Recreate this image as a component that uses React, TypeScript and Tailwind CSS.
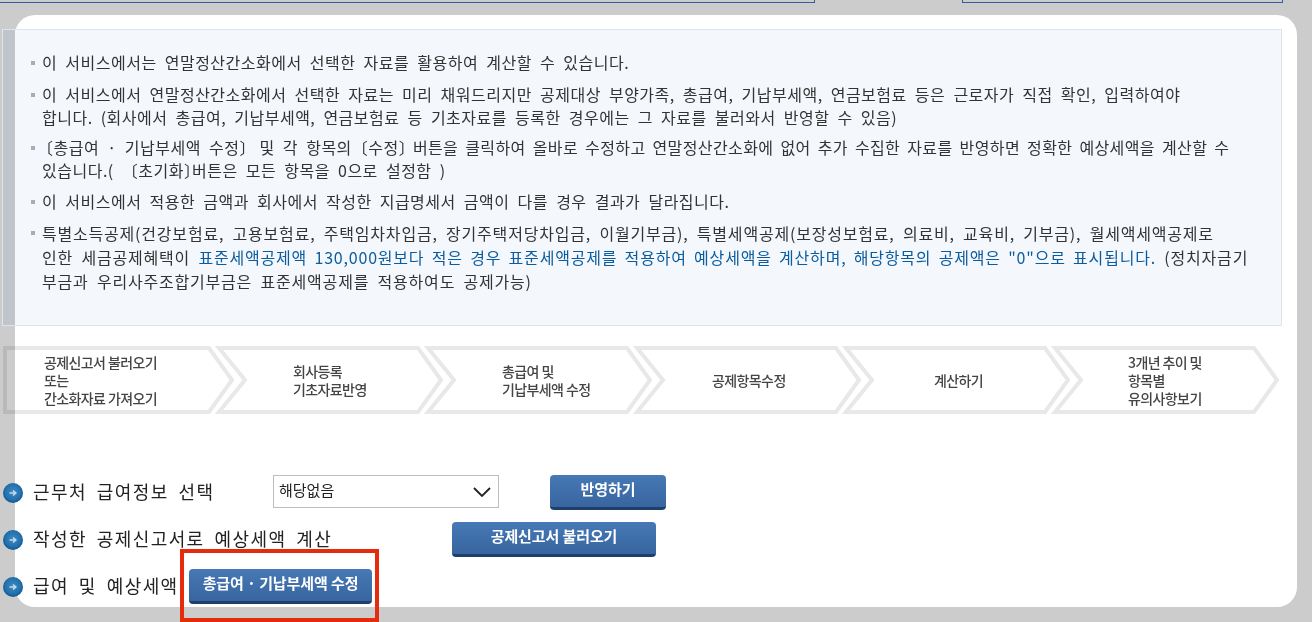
const font = "font-['Noto_Sans_CJK_KR','Noto_Sans',sans-serif]"

const steps = [
  { lines: ["공제신고서 불러오기", "또는", "간소화자료 가져오기"], left: 41 },
  { lines: ["회사등록", "기초자료반영"], left: 81 },
  { lines: ["총급여 및", "기납부세액 수정"], left: 81 },
  { lines: ["공제항목수정"], left: 82 },
  { lines: ["계산하기"], left: 95 },
  { lines: ["3개년 추이 및", "항목별", "유의사항보기"], left: 80 },
]

function Bullet() {
  return <span className="absolute left-[-11px] top-[10px] h-[4px] w-[4px] bg-[#a9adb3]" />
}

function InfoItem({ children, className }: { children: React.ReactNode; className: string }) {
  return (
    <li className={`relative ${className}`}>
      <Bullet />
      {children}
    </li>
  )
}

function RowIcon() {
  return (
    <svg width="20" height="20" viewBox="0 0 20 20" className="shrink-0">
      <defs>
        <radialGradient id="rowIconFill" cx="0.5" cy="0.45" r="0.55">
          <stop offset="0" stopColor="#3d8ac4" />
          <stop offset="0.7" stopColor="#2371ad" />
          <stop offset="1" stopColor="#14558f" />
        </radialGradient>
      </defs>
      <circle cx="10" cy="10" r="10" fill="url(#rowIconFill)" />
      <path d="M6.5 10h6M10 7.5l2.8 2.5-2.8 2.5" fill="none" stroke="#c3d8e8" strokeWidth="1.6" />
    </svg>
  )
}

function BlueButton({ label, className }: { label: string; className: string }) {
  return (
    <button
      className={`h-[35px] rounded-[4px] border-b-[3px] border-[#1f3f6b] bg-gradient-to-b from-[#4679b6] to-[#38659f] pb-[3px] text-[15px] font-bold tracking-[-0.1px] text-white ${className}`}
    >
      {label}
    </button>
  )
}

export default function App() {
  return (
    <div className={`h-[622px] w-[1312px] overflow-hidden bg-[#cccccc] ${font}`}>
      <div className="flex h-[15px] items-start">
        <div className="h-[3px] w-[815px] border-b border-r border-[#2f5f9e]" />
        <div className="ml-[147px] h-[3px] w-[321px] border-x border-b border-[#2f5f9e]" />
      </div>

      <div className="ml-[15px] h-[592px] w-[1282px] rounded-[20px] bg-white pt-[14px]">
        <div className="-ml-[13px] w-[1280px]">
          <div className="flex h-[297px] border border-[#dfe3ea] bg-[#f4f7fc]">
            <div className="w-[12px] shrink-0 bg-[#c0c4cb]" />
            <ul className="pl-[27px] pt-[21px] text-[16px] leading-[23px] tracking-[0.5px] text-[#333333] [word-spacing:4px]">
              <InfoItem className="mb-[9px]">이 서비스에서는 연말정산간소화에서 선택한 자료를 활용하여 계산할 수 있습니다.</InfoItem>
              <InfoItem className="mb-[7px]">
                이 서비스에서 연말정산간소화에서 선택한 자료는 미리 채워드리지만 공제대상 부양가족, 총급여, 기납부세액, 연금보험료 등은 근로자가 직접 확인, 입력하여야
                <br />
                합니다. (회사에서 총급여, 기납부세액, 연금보험료 등 기초자료를 등록한 경우에는 그 자료를 불러와서 반영할 수 있음)
              </InfoItem>
              <InfoItem className="mb-[8px]">
                <span className="-ml-[5px]">〔</span>총급여 · 기납부세액 수정<span className="tracking-[-4px]">〕</span> 및 각 항목의〔수정<span className="tracking-[-10px]">〕</span>{" "}
                <span className="tracking-[0.4px] [word-spacing:3px]">버튼을 클릭하여 올바로 수정하고 연말정산간소화에 없어 추가 수집한 자료를 반영하면 정확한 예상세액을 계산할 수</span>
                <br />
                있습니다.( 〔초기화<span className="tracking-[-8px]">〕</span>버튼은 모든 항목을 0으로 설정함 )
              </InfoItem>
              <InfoItem className="mb-[8px]">이 서비스에서 적용한 금액과 회사에서 작성한 지급명세서 금액이 다를 경우 결과가 달라집니다.</InfoItem>
              <InfoItem className="leading-[24px] tracking-[0.8px]">
                특별소득공제(건강보험료, 고용보험료, 주택임차차입금, 장기주택저당차입금, 이월기부금), 특별세액공제(보장성보험료, 의료비, 교육비, 기부금), 월세액세액공제로
                <br />
                인한 세금공제혜택이 <span className="text-[#0b5c9e] [word-spacing:3px]">표준세액공제액 130,000원보다 적은 경우 표준세액공제를 적용하여 예상세액을 계산하며, 해당항목의 공제액은 "0"으로 표시됩니다.</span> (정치자금기
                <br />
                부금과 우리사주조합기부금은 표준세액공제를 적용하여도 공제가능)
              </InfoItem>
            </ul>
          </div>

          <div className="ml-[1px] mt-[20px] flex h-[68px] mix-blend-multiply">
            {steps.map((step, i) => (
              <div key={i} className="relative h-[68px] w-[209px] shrink-0">
                <svg width="232" height="68" viewBox="0 0 232 68" className="absolute left-0 top-0 overflow-visible">
                  <path
                    d={i === 0 ? "M2 2H206L229 34L206 66H2Z" : "M7 2H206L229 34L206 66H7L33 34Z"}
                    fill="none"
                    stroke="#e8e8e8"
                    strokeWidth="4"
                  />
                </svg>
                <div
                  className="relative flex h-full flex-col justify-center text-[14px] font-medium leading-[18px] tracking-[-0.6px] text-[#444444] blur-[0.4px]"
                  style={{ paddingLeft: step.left }}
                >
                  {step.lines.map((line) => (
                    <span key={line}>{line}</span>
                  ))}
                </div>
              </div>
            ))}
          </div>
        </div>

        <div className="-ml-[12px] mt-[61px] text-[18px] tracking-[1.4px] text-[#222222] [word-spacing:4.5px]">
          <div className="flex h-[35px] items-center">
            <RowIcon />
            <span className="ml-[10px] w-[240px] pb-[3px]">근무처 급여정보 선택</span>
            <div className="mb-[2px] flex h-[33px] w-[226px] items-center justify-between border border-[#bdbdbd] pl-[5px] pr-[7px] text-[15px] tracking-normal">
              <span className="pb-[2px]">해당없음</span>
              <svg width="18" height="10" viewBox="0 0 18 10">
                <path d="M1 1l8 8 8-8" fill="none" stroke="#222222" strokeWidth="1.8" />
              </svg>
            </div>
            <BlueButton label="반영하기" className="ml-[51px] w-[116px]" />
          </div>
          <div className="mt-[12px] flex h-[35px] items-center">
            <RowIcon />
            <span className="ml-[10px] w-[419px] pb-[3px]">작성한 공제신고서로 예상세액 계산</span>
            <BlueButton label="공제신고서 불러오기" className="w-[204px]" />
          </div>
          <div className="mt-[12px] flex h-[35px] items-center">
            <RowIcon />
            <span className="ml-[10px] w-[156px] pb-[3px]">급여 및 예상세액</span>
            <BlueButton label="총급여 · 기납부세액 수정" className="w-[183px]" />
          </div>
        </div>
      </div>

      <div className="absolute left-[180px] top-[549px] h-[73px] w-[199px] border-4 border-[#e62a0c]" />
    </div>
  )
}
